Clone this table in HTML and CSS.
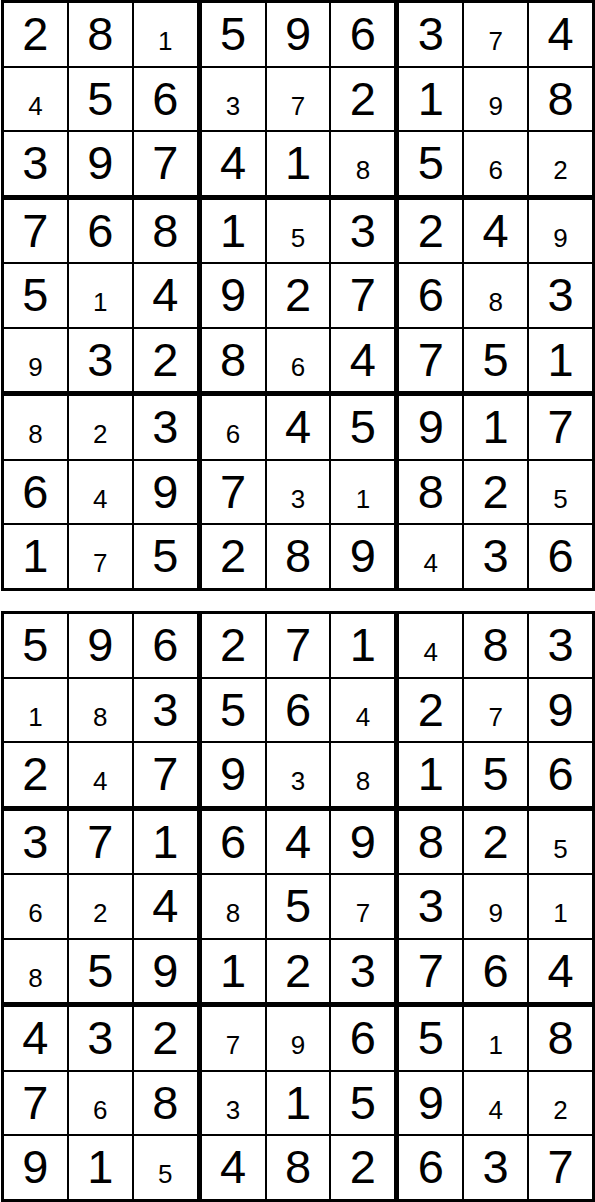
FILE: index.html
```html
<!DOCTYPE html>
<html lang="en">
<head>
    <meta charset="UTF-8">
    <meta name="viewport" content="width=device-width, initial-scale=1.0">
    <title>Sudoku Solutions</title>
    <link rel="stylesheet" href="styles.css">
</head>

<body>
    <div class="page">
        <!-- puzzle 1 -->
        <div class="board">
            <div class="box">
                <div class="cell">2</div><div class="cell">8</div><div class="cell"><span class="sm">1</span></div>
                <div class="cell"><span class="sm">4</span></div><div class="cell">5</div><div class="cell">6</div>
                <div class="cell">3</div><div class="cell">9</div><div class="cell">7</div>
            </div>
            <div class="box">
                <div class="cell">5</div><div class="cell">9</div><div class="cell">6</div>
                <div class="cell"><span class="sm">3</span></div><div class="cell"><span class="sm">7</span></div><div class="cell">2</div>
                <div class="cell">4</div><div class="cell">1</div><div class="cell"><span class="sm">8</span></div>
            </div>
            <div class="box">
                <div class="cell">3</div><div class="cell"><span class="sm">7</span></div><div class="cell">4</div>
                <div class="cell">1</div><div class="cell"><span class="sm">9</span></div><div class="cell">8</div>
                <div class="cell">5</div><div class="cell"><span class="sm">6</span></div><div class="cell"><span class="sm">2</span></div>
            </div>
            <div class="box">
                <div class="cell">7</div><div class="cell">6</div><div class="cell">8</div>
                <div class="cell">5</div><div class="cell"><span class="sm">1</span></div><div class="cell">4</div>
                <div class="cell"><span class="sm">9</span></div><div class="cell">3</div><div class="cell">2</div>
            </div>
            <div class="box">
                <div class="cell">1</div><div class="cell"><span class="sm">5</span></div><div class="cell">3</div>
                <div class="cell">9</div><div class="cell">2</div><div class="cell">7</div>
                <div class="cell">8</div><div class="cell"><span class="sm">6</span></div><div class="cell">4</div>
            </div>
            <div class="box">
                <div class="cell">2</div><div class="cell">4</div><div class="cell"><span class="sm">9</span></div>
                <div class="cell">6</div><div class="cell"><span class="sm">8</span></div><div class="cell">3</div>
                <div class="cell">7</div><div class="cell">5</div><div class="cell">1</div>
            </div>
            <div class="box">
                <div class="cell"><span class="sm">8</span></div><div class="cell"><span class="sm">2</span></div><div class="cell">3</div>
                <div class="cell">6</div><div class="cell"><span class="sm">4</span></div><div class="cell">9</div>
                <div class="cell">1</div><div class="cell"><span class="sm">7</span></div><div class="cell">5</div>
            </div>
            <div class="box">
                <div class="cell"><span class="sm">6</span></div><div class="cell">4</div><div class="cell">5</div>
                <div class="cell">7</div><div class="cell"><span class="sm">3</span></div><div class="cell"><span class="sm">1</span></div>
                <div class="cell">2</div><div class="cell">8</div><div class="cell">9</div>
            </div>
            <div class="box">
                <div class="cell">9</div><div class="cell">1</div><div class="cell">7</div>
                <div class="cell">8</div><div class="cell">2</div><div class="cell"><span class="sm">5</span></div>
                <div class="cell"><span class="sm">4</span></div><div class="cell">3</div><div class="cell">6</div>
            </div>
        </div>

        <!-- puzzle 2 -->
        <div class="board">
            <div class="box">
                <div class="cell">5</div><div class="cell">9</div><div class="cell">6</div>
                <div class="cell"><span class="sm">1</span></div><div class="cell"><span class="sm">8</span></div><div class="cell">3</div>
                <div class="cell">2</div><div class="cell"><span class="sm">4</span></div><div class="cell">7</div>
            </div>
            <div class="box">
                <div class="cell">2</div><div class="cell">7</div><div class="cell">1</div>
                <div class="cell">5</div><div class="cell">6</div><div class="cell"><span class="sm">4</span></div>
                <div class="cell">9</div><div class="cell"><span class="sm">3</span></div><div class="cell"><span class="sm">8</span></div>
            </div>
            <div class="box">
                <div class="cell"><span class="sm">4</span></div><div class="cell">8</div><div class="cell">3</div>
                <div class="cell">2</div><div class="cell"><span class="sm">7</span></div><div class="cell">9</div>
                <div class="cell">1</div><div class="cell">5</div><div class="cell">6</div>
            </div>
            <div class="box">
                <div class="cell">3</div><div class="cell">7</div><div class="cell">1</div>
                <div class="cell"><span class="sm">6</span></div><div class="cell"><span class="sm">2</span></div><div class="cell">4</div>
                <div class="cell"><span class="sm">8</span></div><div class="cell">5</div><div class="cell">9</div>
            </div>
            <div class="box">
                <div class="cell">6</div><div class="cell">4</div><div class="cell">9</div>
                <div class="cell"><span class="sm">8</span></div><div class="cell">5</div><div class="cell"><span class="sm">7</span></div>
                <div class="cell">1</div><div class="cell">2</div><div class="cell">3</div>
            </div>
            <div class="box">
                <div class="cell">8</div><div class="cell">2</div><div class="cell"><span class="sm">5</span></div>
                <div class="cell">3</div><div class="cell"><span class="sm">9</span></div><div class="cell"><span class="sm">1</span></div>
                <div class="cell">7</div><div class="cell">6</div><div class="cell">4</div>
            </div>
            <div class="box">
                <div class="cell">4</div><div class="cell">3</div><div class="cell">2</div>
                <div class="cell">7</div><div class="cell"><span class="sm">6</span></div><div class="cell">8</div>
                <div class="cell">9</div><div class="cell">1</div><div class="cell"><span class="sm">5</span></div>
            </div>
            <div class="box">
                <div class="cell"><span class="sm">7</span></div><div class="cell"><span class="sm">9</span></div><div class="cell">6</div>
                <div class="cell"><span class="sm">3</span></div><div class="cell">1</div><div class="cell">5</div>
                <div class="cell">4</div><div class="cell">8</div><div class="cell">2</div>
            </div>
            <div class="box">
                <div class="cell">5</div><div class="cell"><span class="sm">1</span></div><div class="cell">8</div>
                <div class="cell">9</div><div class="cell"><span class="sm">4</span></div><div class="cell"><span class="sm">2</span></div>
                <div class="cell">6</div><div class="cell">3</div><div class="cell">7</div>
            </div>
        </div>
    </div>
</body>
</html>
```

FILE: styles.css
```css
body {
    margin: 0;
    background: #fff;
    font-family: "Liberation Sans", Arial, sans-serif;
}

.page {
    display: flex;
    flex-direction: column;
    gap: 20px;
    padding-left: 1px;
}

/* black board, the gaps become the lines */
.board {
    box-sizing: border-box;
    width: 594px;
    height: 591px;
    padding: 3px;
    background: #000;
    display: grid;
    grid-template-columns: repeat(3, minmax(0, 1fr));
    grid-template-rows: repeat(3, minmax(0, 1fr));
    gap: 5px;
}

.box {
    display: grid;
    grid-template-columns: repeat(3, minmax(0, 1fr));
    grid-template-rows: repeat(3, minmax(0, 1fr));
    gap: 2px;
}

.cell {
    background: #fff;
    color: #000;
    text-align: center;
    font-size: 47px;
    line-height: 62px;
    overflow: hidden;
}

.cell .sm {
    font-size: 26px;
    line-height: 0;
}
```
